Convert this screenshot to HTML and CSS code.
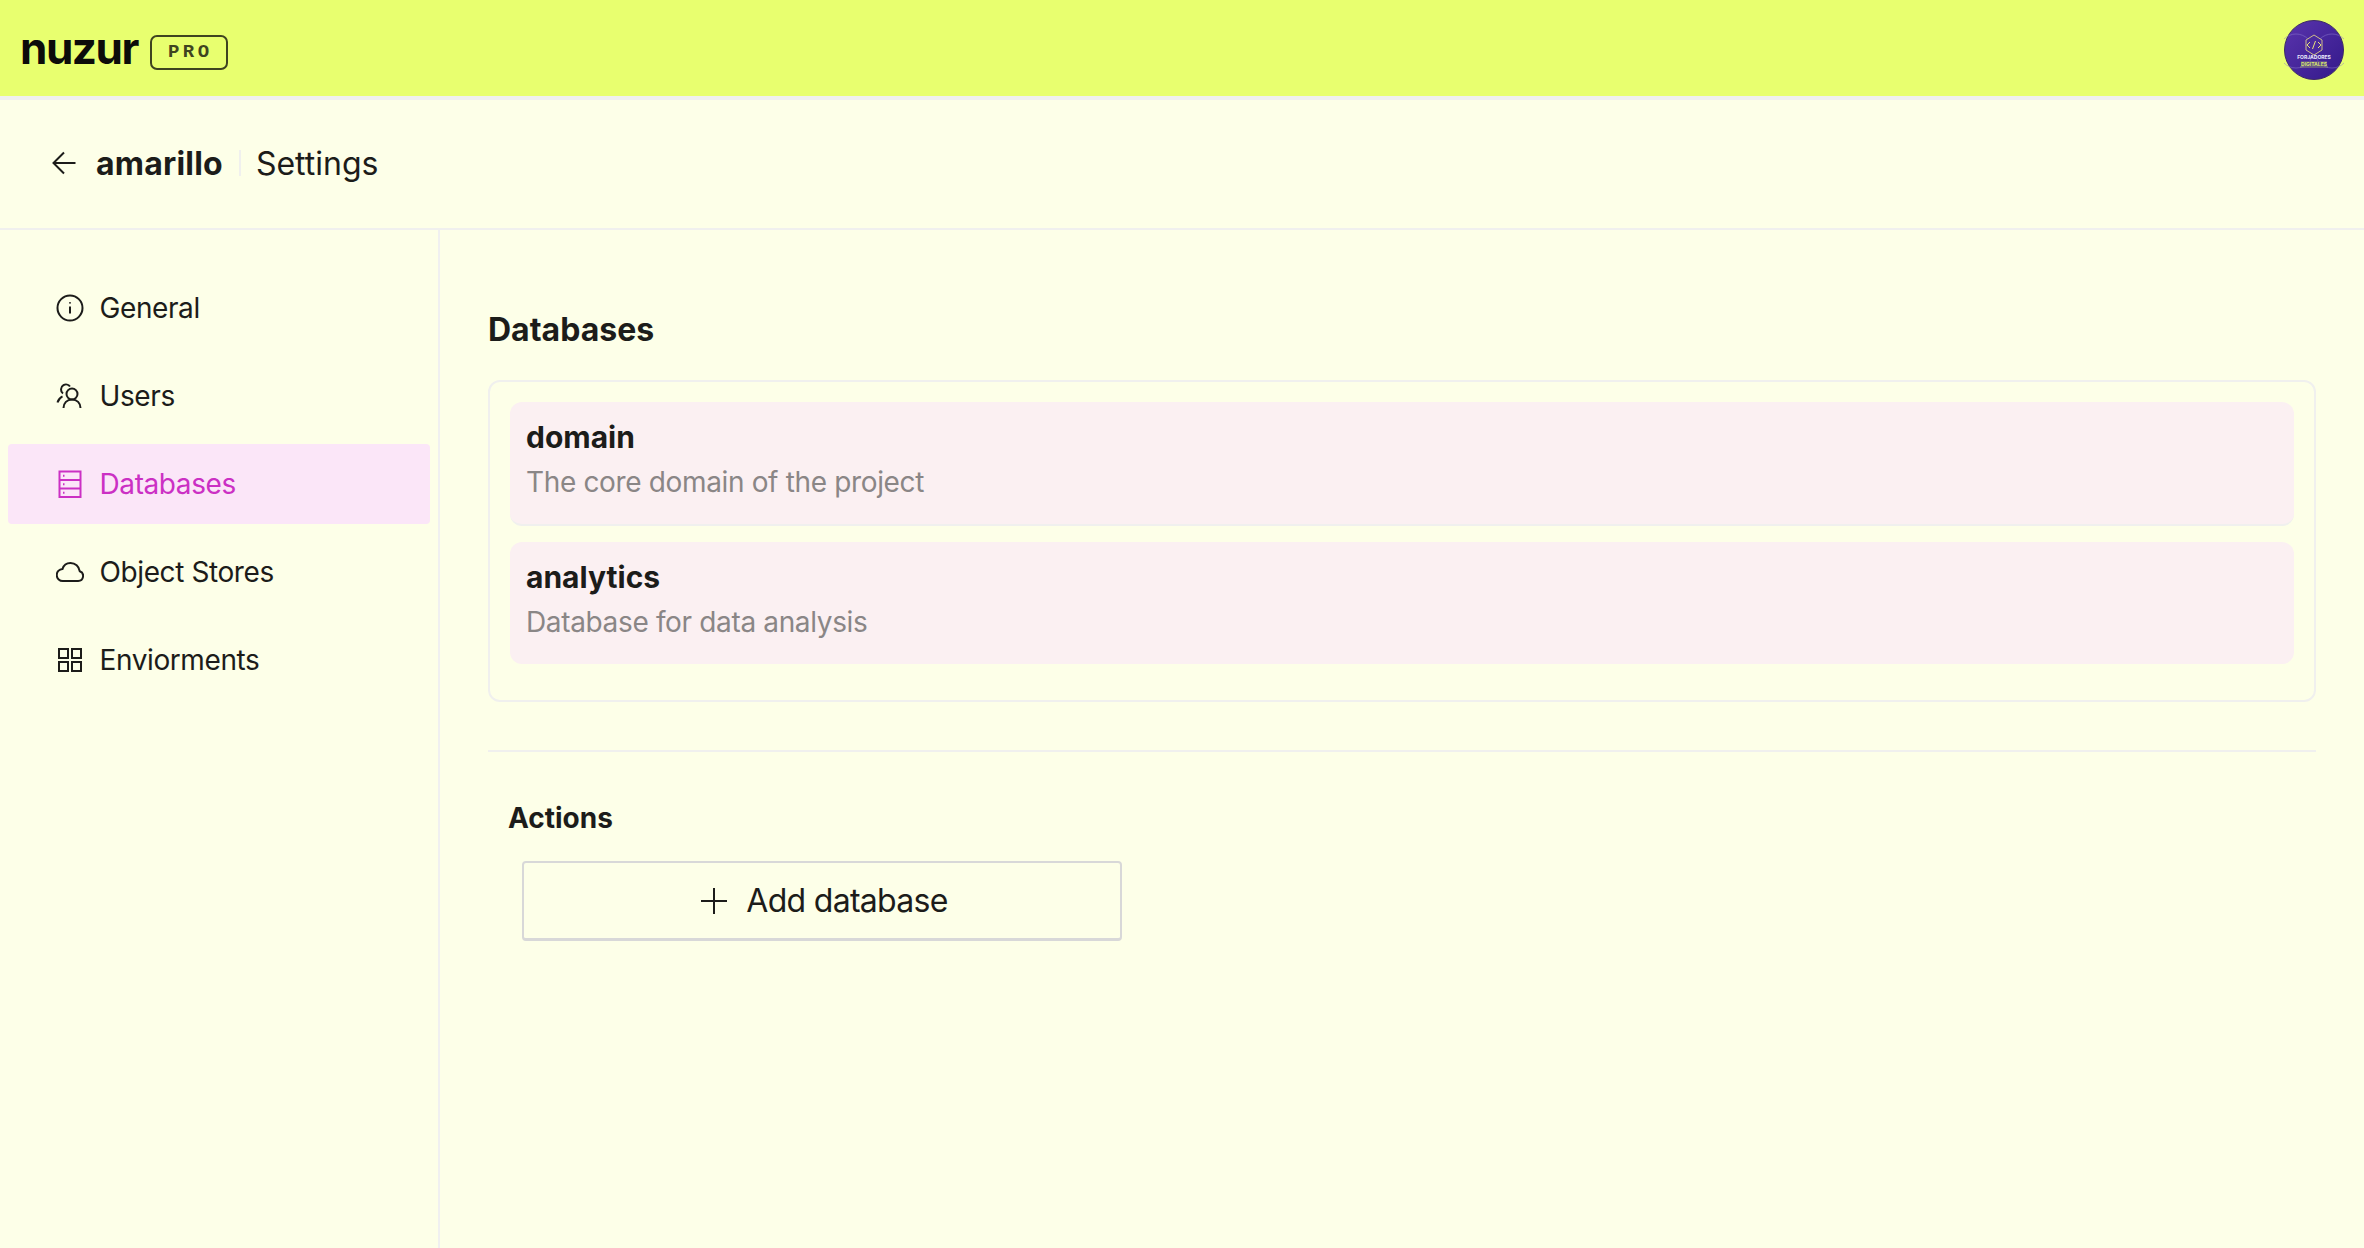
FILE: index.html
```html
<!DOCTYPE html>
<html lang="en">

<head>
    <meta charset="UTF-8">
    <title>amarillo - Settings</title>
    <link rel="stylesheet" href="styles.css">
</head>

<body>
    <header class="topbar">
        <div class="brand">
            <span class="logo">nuzur</span>
            <span class="pro-badge">PRO</span>
        </div>
        <svg class="avatar" viewBox="0 0 60 60">
            <defs>
                <linearGradient id="avatarFill" x1="0" y1="0" x2="1" y2="1">
                    <stop offset="0" stop-color="#5a34ad" />
                    <stop offset="1" stop-color="#33198a" />
                </linearGradient>
            </defs>
            <circle cx="30" cy="30" r="29.5" fill="url(#avatarFill)" stroke="#3d2a66" />
            <circle cx="12" cy="31" r="17" fill="none" stroke="#8f7bd0" stroke-width=".5" />
            <circle cx="48" cy="31" r="17" fill="none" stroke="#8f7bd0" stroke-width=".5" />
            <polygon points="30,15 38,20 38,30 30,35 22,30 22,20" fill="#4a2a9f" stroke="#cdbb8a" stroke-width="1" />
            <path d="M26 22l-3 3 3 3M34 22l3 3-3 3M31.500 21l-3 8" fill="none" stroke="#e8e27a" stroke-width="1" />
            <text x="30" y="39" class="avatar-top">FORJADORES</text>
            <rect x="17" y="41" width="26" height="5" fill="#5e4a8e" />
            <text x="30" y="45.500" class="avatar-bottom">DIGITALES</text>
            <path d="M16 47h28" stroke="#c9d96a" stroke-width=".6" />
        </svg>
    </header>

    <div class="subheader">
        <svg class="back-icon" viewBox="0 0 24 24">
            <path d="M23.500 12H1.500M12 1.500 1.500 12 12 22.500" />
        </svg>
        <span class="project-name">amarillo</span>
        <span class="subheader-sep"></span>
        <span class="page-name">Settings</span>
    </div>

    <div class="layout">
        <nav class="sidebar">
            <a class="nav-item">
                <svg class="nav-icon" viewBox="0 0 28 28">
                    <circle cx="14" cy="14" r="12.500" />
                    <path d="M14 12.500v7" />
                    <path d="M14 8.200v1.300" />
                </svg>
                General
            </a>
            <a class="nav-item">
                <svg class="nav-icon" viewBox="0 0 28 28">
                    <circle cx="16" cy="12" r="5.500" />
                    <path d="M7.500 26c0-5 3.500-8.500 8.500-8.500s8.500 3.500 8.500 8.500" />
                    <path d="M7 11.500A5 5 0 0 1 7.500 3.200 5 5 0 0 1 14 4.500" />
                    <path d="M1.500 20.500c.8-3 2.500-5 5-6.200" />
                </svg>
                Users
            </a>
            <a class="nav-item active">
                <svg class="nav-icon" viewBox="0 0 28 28">
                    <rect x="3.500" y="1.500" width="21" height="25.500" />
                    <path d="M3.500 10h21M3.500 18.500h21" />
                    <path d="M7 5.700h1.500M7 14.200h1.500M7 22.700h1.500" />
                </svg>
                Databases
            </a>
            <a class="nav-item">
                <svg class="nav-icon" viewBox="0 0 28 28">
                    <path d="M7 23h15a5 5 0 0 0 1.800-9.700C23 8.500 19.300 5 14.500 5 10.500 5 7.500 7.500 6.500 11A6 6 0 0 0 7 23Z" />
                </svg>
                Object Stores
            </a>
            <a class="nav-item">
                <svg class="nav-icon" viewBox="0 0 28 28">
                    <rect x="3" y="3" width="9" height="9" />
                    <rect x="16" y="3" width="9" height="9" />
                    <rect x="3" y="16" width="9" height="9" />
                    <rect x="16" y="16" width="9" height="9" />
                </svg>
                Enviorments
            </a>
        </nav>

        <main class="content">
            <h1>Databases</h1>
            <div class="db-box">
                <div class="db-card">
                    <div class="db-name">domain</div>
                    <div class="db-desc">The core domain of the project</div>
                </div>
                <div class="db-card">
                    <div class="db-name">analytics</div>
                    <div class="db-desc">Database for data analysis</div>
                </div>
            </div>
            <hr class="divider">
            <div class="actions">
                <h2>Actions</h2>
                <button class="add-btn">
                    <svg class="plus-icon" viewBox="0 0 28 28">
                        <path d="M14 1v26M1 14h26" />
                    </svg>
                    Add database
                </button>
            </div>
        </main>
    </div>
</body>

</html>
```

FILE: styles.css
```css
* {
    box-sizing: border-box;
}

body {
    margin: 0;
    height: 100vh;
    overflow: hidden;
    display: flex;
    flex-direction: column;
    font-family: 'Inter', sans-serif;
    background-color: #fdffe8;
    color: #1c1c1a;
}

.topbar {
    height: 100px;
    flex-shrink: 0;
    display: flex;
    justify-content: space-between;
    align-items: center;
    padding: 4px 20px 0 20px;
    background-color: #e8ff6f;
    border-bottom: 4px solid #f0f0ee;
}

.brand {
    display: flex;
    align-items: center;
    gap: 12px;
}

.logo {
    font-size: 44px;
    font-weight: 700;
    line-height: 44px;
    letter-spacing: -1.5px;
    margin-top: -4px;
    color: #0c0c0a;
}

.pro-badge {
    width: 78px;
    height: 35px;
    margin-top: 4px;
    display: flex;
    justify-content: center;
    align-items: center;
    border: 2px solid #3f4420;
    border-radius: 7px;
    font-family: 'Liberation Mono', monospace;
    font-size: 19px;
    font-weight: 700;
    letter-spacing: 3.5px;
    padding-left: 3px;
    color: #3f4420;
}

.avatar {
    width: 60px;
    height: 60px;
}

.avatar-top {
    font-family: 'Inter', sans-serif;
    font-size: 5px;
    font-weight: 700;
    text-anchor: middle;
    fill: #eeeeff;
}

.avatar-bottom {
    font-family: 'Inter', sans-serif;
    font-size: 5px;
    font-weight: 700;
    text-anchor: middle;
    fill: #d9e76a;
}

.subheader {
    height: 130px;
    flex-shrink: 0;
    display: flex;
    align-items: center;
    padding: 0 0 2px 52px;
    border-bottom: 2px solid #f0f0ee;
}

.back-icon {
    width: 24px;
    height: 24px;
    margin-right: 20px;
    fill: none;
    stroke: #1c1c1a;
    stroke-width: 2;
}

.project-name {
    font-size: 32px;
    font-weight: 700;
    letter-spacing: 0.2px;
}

.subheader-sep {
    width: 2px;
    height: 26px;
    margin: 0 15px 0 16px;
    background-color: #f0f0ee;
}

.page-name {
    font-size: 32px;
}

.layout {
    flex: 1;
    display: flex;
    min-height: 0;
}

.sidebar {
    width: 440px;
    flex-shrink: 0;
    padding: 38px 8px 0;
    border-right: 2px solid #f0f0f0;
    display: flex;
    flex-direction: column;
    gap: 8px;
}

.nav-item {
    height: 80px;
    display: flex;
    align-items: center;
    gap: 15.500px;
    padding-left: 48px;
    border-radius: 4px;
    font-size: 28px;
    letter-spacing: -0.4px;
}

.nav-item.active {
    background-color: #fbe6f8;
    color: #cb30c4;
}

.nav-icon {
    width: 28px;
    height: 28px;
    fill: none;
    stroke: currentColor;
    stroke-width: 2;
}

.content {
    flex: 1;
    padding: 80px 48px 0;
}

h1 {
    margin: 0 0 30px;
    font-size: 32px;
    font-weight: 700;
    line-height: 40px;
}

.db-box {
    height: 322px;
    padding: 20px;
    border: 2px solid #f0f0ee;
    border-radius: 12px;
    display: flex;
    flex-direction: column;
    gap: 16px;
}

.db-card {
    height: 122px;
    padding: 16px;
    background-color: #fbf0f2;
    border-radius: 12px;
}

.db-card:first-child {
    height: 124px;
    border-bottom: 2px solid #f0f0ee;
}

.db-name {
    font-size: 30px;
    font-weight: 700;
    line-height: 38px;
}

.db-desc {
    margin-top: 7px;
    font-size: 28px;
    line-height: 38px;
    letter-spacing: -0.35px;
    color: #8a8686;
}

.divider {
    height: 2px;
    margin: 48px 0 0;
    border: none;
    background-color: #f0f0ee;
}

.actions {
    padding: 48px 20px 0;
}

h2 {
    margin: 0 0 25px;
    font-size: 28px;
    font-weight: 700;
    line-height: 36px;
}

.add-btn {
    width: 600px;
    height: 80px;
    margin-left: 14px;
    padding: 0 0 0 4px;
    display: flex;
    justify-content: center;
    align-items: center;
    gap: 18px;
    background: none;
    border: 2px solid #d8d8d8;
    border-bottom-width: 3px;
    border-radius: 4px;
    font-family: inherit;
    font-size: 32px;
    letter-spacing: -0.7px;
    color: #1c1c1a;
}

.plus-icon {
    width: 28px;
    height: 28px;
    fill: none;
    stroke: #1c1c1a;
    stroke-width: 2;
}
```
